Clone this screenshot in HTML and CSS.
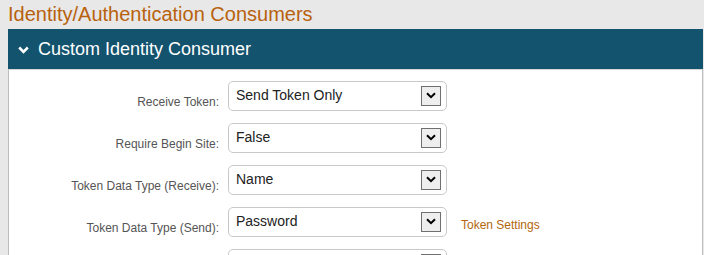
FILE: index.html
```html
<!doctype html>

<html>
    <head>
        <meta charset="utf-8">

        <title>Identity/Authentication Consumers</title>

        <link rel="stylesheet" href="styles.css">

    </head>

    <body>

        <div id="sayfa">
            <div id="baslik">Identity/Authentication Consumers</div>

            <div class="bolum">
                <div class="bolum-baslik">
                    <svg class="ok" width="11" height="8" viewBox="0 0 11 8">
                        <path d="M1.2 1.5 L5.5 5.8 L9.8 1.5" fill="none" stroke="#fff" stroke-width="2.6"/>
                    </svg>
                    <span>Custom Identity Consumer</span>
                </div>

                <div class="bolum-icerik">
                    <div class="satir">
                        <div class="etiket">Receive Token:</div>
                        <div class="secim">
                            <span class="secim-metin">Send Token Only</span>
                            <div class="secim-bt">
                                <svg width="10" height="7" viewBox="0 0 10 7"><path d="M1 1.2 L5 5.2 L9 1.2" fill="none" stroke="#000" stroke-width="2"/></svg>
                            </div>
                        </div>
                    </div>

                    <div class="satir">
                        <div class="etiket">Require Begin Site:</div>
                        <div class="secim">
                            <span class="secim-metin">False</span>
                            <div class="secim-bt">
                                <svg width="10" height="7" viewBox="0 0 10 7"><path d="M1 1.2 L5 5.2 L9 1.2" fill="none" stroke="#000" stroke-width="2"/></svg>
                            </div>
                        </div>
                    </div>

                    <div class="satir">
                        <div class="etiket">Token Data Type (Receive):</div>
                        <div class="secim">
                            <span class="secim-metin">Name</span>
                            <div class="secim-bt">
                                <svg width="10" height="7" viewBox="0 0 10 7"><path d="M1 1.2 L5 5.2 L9 1.2" fill="none" stroke="#000" stroke-width="2"/></svg>
                            </div>
                        </div>
                    </div>

                    <div class="satir">
                        <div class="etiket">Token Data Type (Send):</div>
                        <div class="secim">
                            <span class="secim-metin">Password</span>
                            <div class="secim-bt">
                                <svg width="10" height="7" viewBox="0 0 10 7"><path d="M1 1.2 L5 5.2 L9 1.2" fill="none" stroke="#000" stroke-width="2"/></svg>
                            </div>
                        </div>
                        <a class="baglanti" href="#">Token Settings</a>
                    </div>

                    <div class="satir">
                        <div class="etiket"></div>
                        <div class="secim">
                            <span class="secim-metin"></span>
                            <div class="secim-bt">
                                <svg width="10" height="7" viewBox="0 0 10 7"><path d="M1 1.2 L5 5.2 L9 1.2" fill="none" stroke="#000" stroke-width="2"/></svg>
                            </div>
                        </div>
                    </div>
                </div>
            </div>
        </div>

    </body>
</html>
```

FILE: styles.css
```css
*{
    margin: 0px;
    padding: 0px;
    box-sizing: border-box;
}
html, body{
    height: 255px;
    overflow: hidden;
}
body{
    background-color: #e8e8e8;
    font-family: "Liberation Sans", Arial, sans-serif;
}
#sayfa{
    margin-left: 8px;
    margin-right: 1px;
}
#baslik{
    height: 29px;
    padding-top: 2px;
    font-size: 20px;
    line-height: 24px;
    color: #b8620e;
}
.bolum-baslik{
    height: 40px;
    display: flex;
    align-items: center;
    padding-left: 10px;
    background-color: #13536e;
    color: white;
    font-size: 18px;
}
.ok{
    margin-right: 9px;
    margin-top: 1px;
}
.bolum-icerik{
    background-color: white;
    border-left: 1px solid #bdbdbd;
    border-right: 1px solid #bdbdbd;
    border-top: 1px solid #d6d6d6;
    padding-top: 11px;
    height: 186px;
    overflow: hidden;
}
.satir{
    display: flex;
    align-items: flex-start;
    margin-bottom: 12px;
}
.etiket{
    width: 210px;
    text-align: right;
    padding-top: 14px;
    font-size: 12px;
    line-height: 14px;
    color: #555555;
}
.secim{
    width: 219px;
    height: 30px;
    margin-left: 9px;
    flex-shrink: 0;
    display: flex;
    align-items: center;
    justify-content: space-between;
    padding-left: 7px;
    padding-right: 5px;
    border: 1px solid #c9c9c9;
    border-radius: 5px;
    background-color: white;
    font-size: 14px;
    color: #222222;
}
.secim-metin{
    margin-top: -2px;
}
.secim-bt{
    width: 20px;
    height: 20px;
    display: flex;
    justify-content: center;
    align-items: center;
    border: 1px solid #6f6f6f;
    background-color: #eeeeee;
    margin-top: -1px;
}
.baglanti{
    margin-left: 14px;
    padding-top: 11px;
    font-size: 12px;
    line-height: 14px;
    color: #b3660d;
    text-decoration: none;
}
```
